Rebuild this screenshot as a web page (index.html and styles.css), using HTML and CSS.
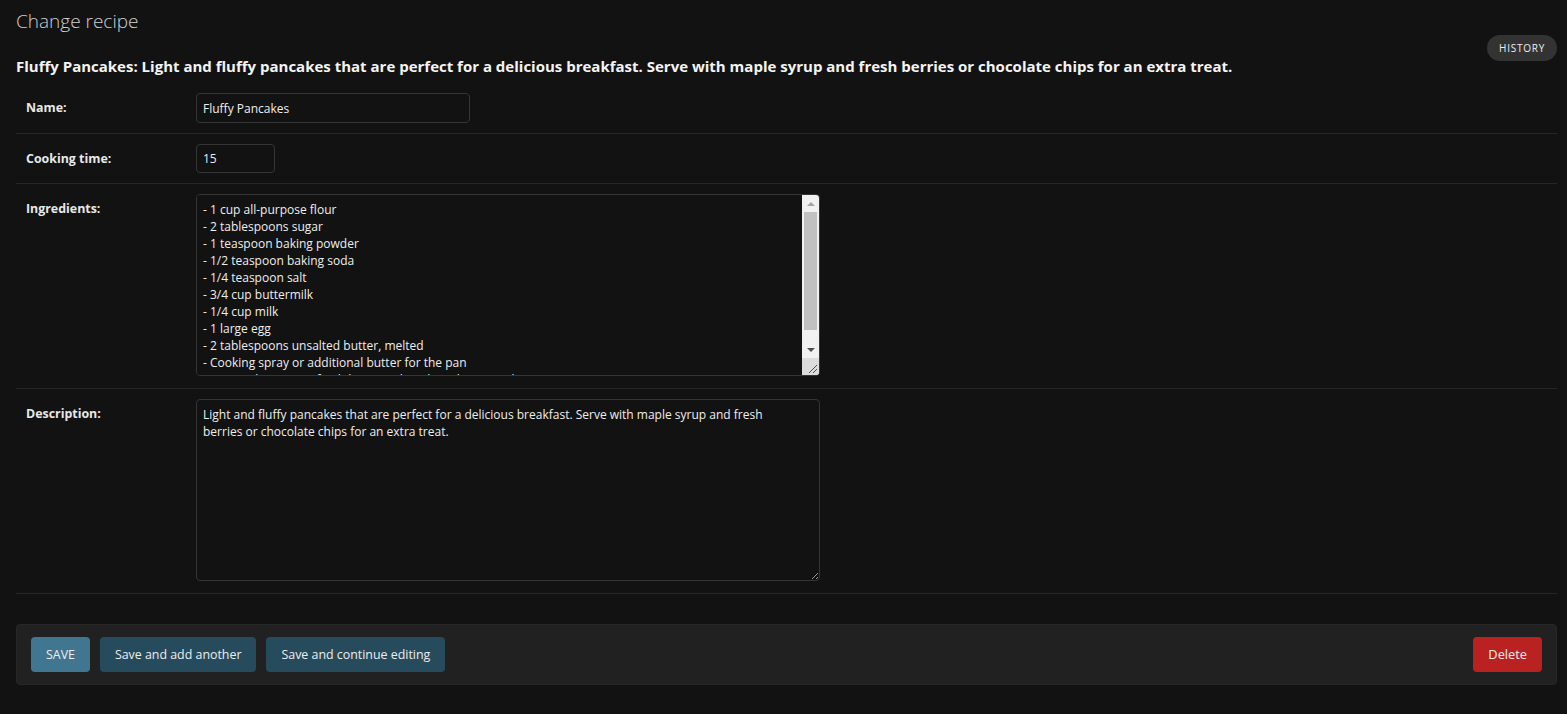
FILE: index.html
```html
<!DOCTYPE html>
<html lang="en">
<head>
<meta charset="utf-8">
<title>Change recipe</title>
<link rel="stylesheet" href="styles.css">
</head>
<body>
<div class="content">
  <h1 class="title">Change recipe</h1>
  <div class="subhead">
    <h2 class="subtitle">Fluffy Pancakes: Light and fluffy pancakes that are perfect for a delicious breakfast. Serve with maple syrup and fresh berries or chocolate chips for an extra treat.</h2>
    <ul class="object-tools"><li><a href="#" class="historylink">History</a></li></ul>
  </div>
  <form class="change-form">
    <fieldset class="module">
      <div class="form-row">
        <label class="required" for="id_name">Name:</label>
        <input type="text" id="id_name" class="vTextField" value="Fluffy Pancakes">
      </div>
      <div class="form-row">
        <label class="required" for="id_time">Cooking time:</label>
        <input type="text" id="id_time" class="vIntegerField" value="15">
      </div>
      <div class="form-row">
        <label class="required" for="id_ing">Ingredients:</label>
        <div class="textarea-wrap">
          <textarea id="id_ing" class="vLargeTextField inner" rows="10">- 1 cup all-purpose flour
- 2 tablespoons sugar
- 1 teaspoon baking powder
- 1/2 teaspoon baking soda
- 1/4 teaspoon salt
- 3/4 cup buttermilk
- 1/4 cup milk
- 1 large egg
- 2 tablespoons unsalted butter, melted
- Cooking spray or additional butter for the pan
- Optional toppings: fresh berries, chocolate chips, maple syrup</textarea>
          <div class="fake-scrollbar" aria-hidden="true">
            <span class="sb-arrow"><span class="tri-up"></span></span>
            <span class="sb-track"><span class="sb-thumb"></span></span>
            <span class="sb-arrow"><span class="tri-down"></span></span>
            <span class="sb-resizer">
              <svg width="17" height="17" viewBox="0 0 17 17"><path d="M15 7 L7 15 M15 11 L11 15" stroke="#4d4d4d" stroke-width="1" fill="none"/></svg>
            </span>
          </div>
        </div>
      </div>
      <div class="form-row">
        <label class="required" for="id_desc">Description:</label>
        <textarea id="id_desc" class="vLargeTextField desc" rows="10">Light and fluffy pancakes that are perfect for a delicious breakfast. Serve with maple syrup and fresh berries or chocolate chips for an extra treat.</textarea>
      </div>
    </fieldset>
    <div class="submit-row">
      <button type="button" class="btn btn-default">SAVE</button>
      <button type="button" class="btn">Save and add another</button>
      <button type="button" class="btn">Save and continue editing</button>
      <a href="#" class="deletelink">Delete</a>
    </div>
  </form>
</div>
</body>
</html>
```

FILE: styles.css
```css
* { box-sizing: border-box; }
html, body {
  margin: 0;
  padding: 0;
  background: #121212;
  color: #eeeeee;
  font-family: "Open Sans", "Noto Sans", sans-serif;
  font-size: 14px;
}
.content {
  padding: 9px 10px 0 16px;
}
.title {
  margin: 0;
  font-size: 19px;
  font-weight: 300;
  line-height: 24px;
  color: #cfcfcf;
}
.subhead {
  display: flex;
  align-items: flex-start;
  justify-content: space-between;
  margin-top: 2px;
}
.subtitle {
  margin: 20px 0 0 0;
  font-size: 15px;
  font-weight: 700;
  line-height: 22px;
  color: #f4f4f4;
}
.object-tools {
  list-style: none;
  margin: 0;
  padding: 0;
}
.object-tools a {
  display: block;
  padding: 3px 12px;
  background: #333333;
  color: #eeeeee;
  font-size: 10px;
  line-height: 20px;
  letter-spacing: 0.75px;
  text-transform: uppercase;
  text-decoration: none;
  border-radius: 15px;
}
.change-form { margin: 0; }
.module {
  margin: 6px 0 30px;
  padding: 0;
  border: 0;
  min-width: 0;
}
.form-row {
  display: flex;
  align-items: flex-start;
  padding: 10px;
  border-bottom: 1px solid #272727;
  font-size: 12px;
}
.form-row label {
  width: 170px;
  flex: none;
  padding: 6px 10px 0 0;
  font-size: 12.4px;
  font-weight: 700;
  color: #e8e8e8;
}
input, textarea {
  font-family: "Open Sans", "Noto Sans", sans-serif;
  font-size: 12px;
  color: #eeeeee;
  background: #121212;
  border: 1px solid #353535;
  border-radius: 4px;
  padding: 5px 6px;
  margin: 0;
  outline: none;
}
input {
  height: 30px;
}
.vTextField { width: 274px; }
.vIntegerField { width: 79px; height: 29px; }
textarea {
  display: block;
  line-height: 17px;
  padding-top: 6px;
  padding-bottom: 4px;
}
.desc {
  width: 624px;
  height: 182px;
  resize: vertical;
  padding-right: 20px;
  margin-bottom: 2px;
}
.textarea-wrap {
  display: flex;
  width: 624px;
  height: 182px;
  border: 1px solid #353535;
  border-radius: 4px;
  overflow: hidden;
  margin-bottom: 2px;
}
.textarea-wrap .inner {
  flex: 1;
  height: 180px;
  border: 0;
  border-radius: 0;
  resize: none;
  overflow: hidden;
}
.fake-scrollbar {
  width: 17px;
  flex: none;
  display: flex;
  flex-direction: column;
  background: #f1f1f1;
}
.sb-arrow {
  height: 17px;
  flex: none;
  display: flex;
  align-items: center;
  justify-content: center;
}
.tri-up {
  width: 0;
  height: 0;
  border-left: 4px solid transparent;
  border-right: 4px solid transparent;
  border-bottom: 4px solid #a3a3a3;
}
.tri-down {
  width: 0;
  height: 0;
  border-left: 4px solid transparent;
  border-right: 4px solid transparent;
  border-top: 4px solid #505050;
}
.sb-track {
  flex: 1;
  padding: 0 2px;
}
.sb-thumb {
  display: block;
  height: 118px;
  background: #c1c1c1;
}
.sb-resizer {
  height: 17px;
  flex: none;
  background: #dcdcdc;
  display: block;
}
.sb-resizer svg { display: block; }
.submit-row {
  display: flex;
  gap: 10px;
  align-items: center;
  padding: 12px 14px;
  background: #212121;
  border: 1px solid #272727;
  border-radius: 4px;
  margin-bottom: 20px;
}
.btn {
  height: 35px;
  padding: 0 15px;
  border: 0;
  border-radius: 4px;
  background: #264b5d;
  color: #eeeeee;
  font-family: "Open Sans", "Noto Sans", sans-serif;
  font-size: 12.4px;
  cursor: pointer;
}
.btn-default {
  background: #417690;
}
.deletelink {
  margin-left: auto;
  display: block;
  height: 35px;
  line-height: 35px;
  padding: 0 15px;
  border-radius: 4px;
  background: #ba2121;
  color: #eeeeee;
  font-size: 12.8px;
  text-decoration: none;
}
```
